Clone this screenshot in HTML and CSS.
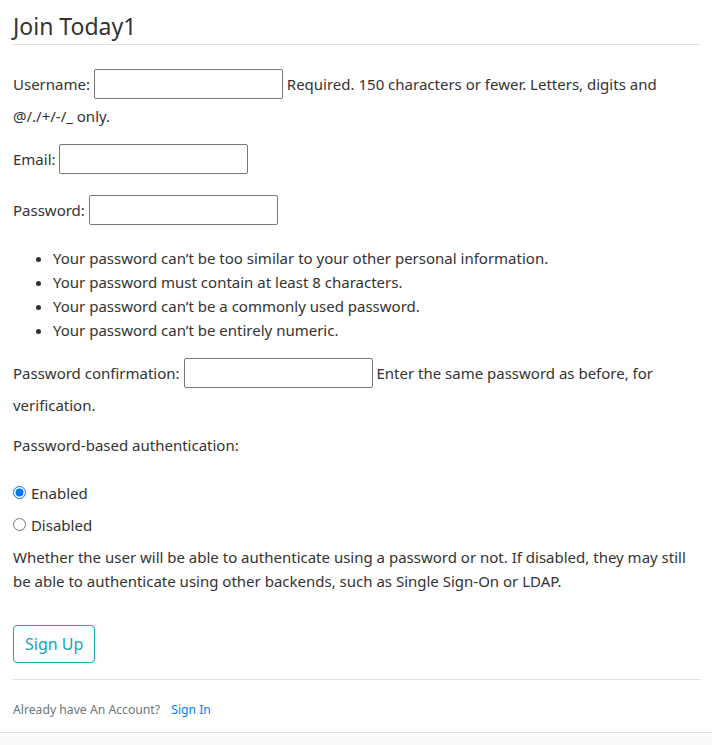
FILE: index.html
```html
<!DOCTYPE html>
<html lang="en">
<head>
<meta charset="utf-8">
<title>Join Today</title>
<link rel="stylesheet" href="styles.css">
</head>
<body>
<section class="content-section">
  <form class="form">
    <fieldset class="fieldset">
      <legend class="legend">Join Today1</legend>
      <p class="field"><label class="label">Username:</label> <input class="text-input" type="text"> <span class="helptext">Required. 150 characters or fewer. Letters, digits and @/./+/-/_ only.</span></p>
      <p class="field"><label class="label">Email:</label> <input class="text-input" type="email"></p>
      <p class="field"><label class="label">Password:</label> <input class="text-input" type="password"></p>
      <ul class="rules">
        <li>Your password can’t be too similar to your other personal information.</li>
        <li>Your password must contain at least 8 characters.</li>
        <li>Your password can’t be a commonly used password.</li>
        <li>Your password can’t be entirely numeric.</li>
      </ul>
      <p class="field"><label class="label">Password confirmation:</label> <input class="text-input" type="password"> <span class="helptext">Enter the same password as before, for verification.</span></p>
      <p class="field"><label class="label">Password-based authentication:</label></p>
      <div class="radios">
        <div class="radio-row"><label class="label"><input class="radio" type="radio" name="auth" checked> Enabled</label></div>
        <div class="radio-row"><label class="label"><input class="radio" type="radio" name="auth"> Disabled</label></div>
      </div>
      <p class="field note">Whether the user will be able to authenticate using a password or not. If disabled, they may still be able to authenticate using other backends, such as Single Sign-On or LDAP.</p>
    </fieldset>
    <div class="form-group">
      <button class="btn-outline" type="button">Sign Up</button>
    </div>
  </form>
  <div class="footer">
    <small class="muted">Already have An Account? <a class="signin" href="#">Sign In</a></small>
  </div>
</section>
</body>
</html>
```
FILE: styles.css
```css
html, body {
  margin: 0;
  padding: 0;
}
body {
  background: #fafafa;
  font-family: "Segoe UI", "Noto Sans", sans-serif;
  font-size: 15px;
  line-height: 24px;
  color: #333333;
}
.content-section {
  background: #ffffff;
  padding: 8px 11px 10px 13px;
  border-bottom: 1px solid #dddddd;
}
.form {
  margin: 0;
}
.fieldset {
  margin: 0 0 16px 0;
  padding: 0;
  border: 0;
  min-width: 0;
}
.legend {
  display: block;
  width: 100%;
  padding: 0;
  margin: 0 0 24px 0;
  font-size: 23px;
  line-height: 36px;
  border-bottom: 1px solid #dee2e6;
  color: #333333;
}
.field {
  margin: 0 0 16px 0;
}
.label {
  display: inline-block;
  margin-bottom: 8px;
}
.text-input {
  box-sizing: border-box;
  width: 189px;
  height: 30px;
  margin: 0;
  padding: 1px 2px;
  font: inherit;
  border: 1px solid #767676;
  border-radius: 2px;
  background: #ffffff;
  vertical-align: baseline;
}
.rules {
  margin: 0 0 16px 0;
  padding-left: 40px;
}
.radios {
  margin: 0;
}
.radio-row {
  margin: 0;
}
.radio {
  width: 13px;
  height: 13px;
  margin: 0 1px 0 0;
  accent-color: #0075ff;
}
.note {
  margin-top: 0;
}
.form-group {
  margin-bottom: 16px;
}
.btn-outline {
  font: inherit;
  font-size: 16px;
  line-height: 24px;
  padding: 6px 11px;
  color: #17a2b8;
  background: transparent;
  border: 1px solid #17a2b8;
  border-radius: 4px;
  cursor: pointer;
}
.footer {
  border-top: 1px solid #dee2e6;
  padding-top: 16px;
}
.muted {
  font-size: 12.2px;
  color: #6c757d;
}
.signin {
  margin-left: 8px;
  color: #007bff;
  text-decoration: none;
}
```
